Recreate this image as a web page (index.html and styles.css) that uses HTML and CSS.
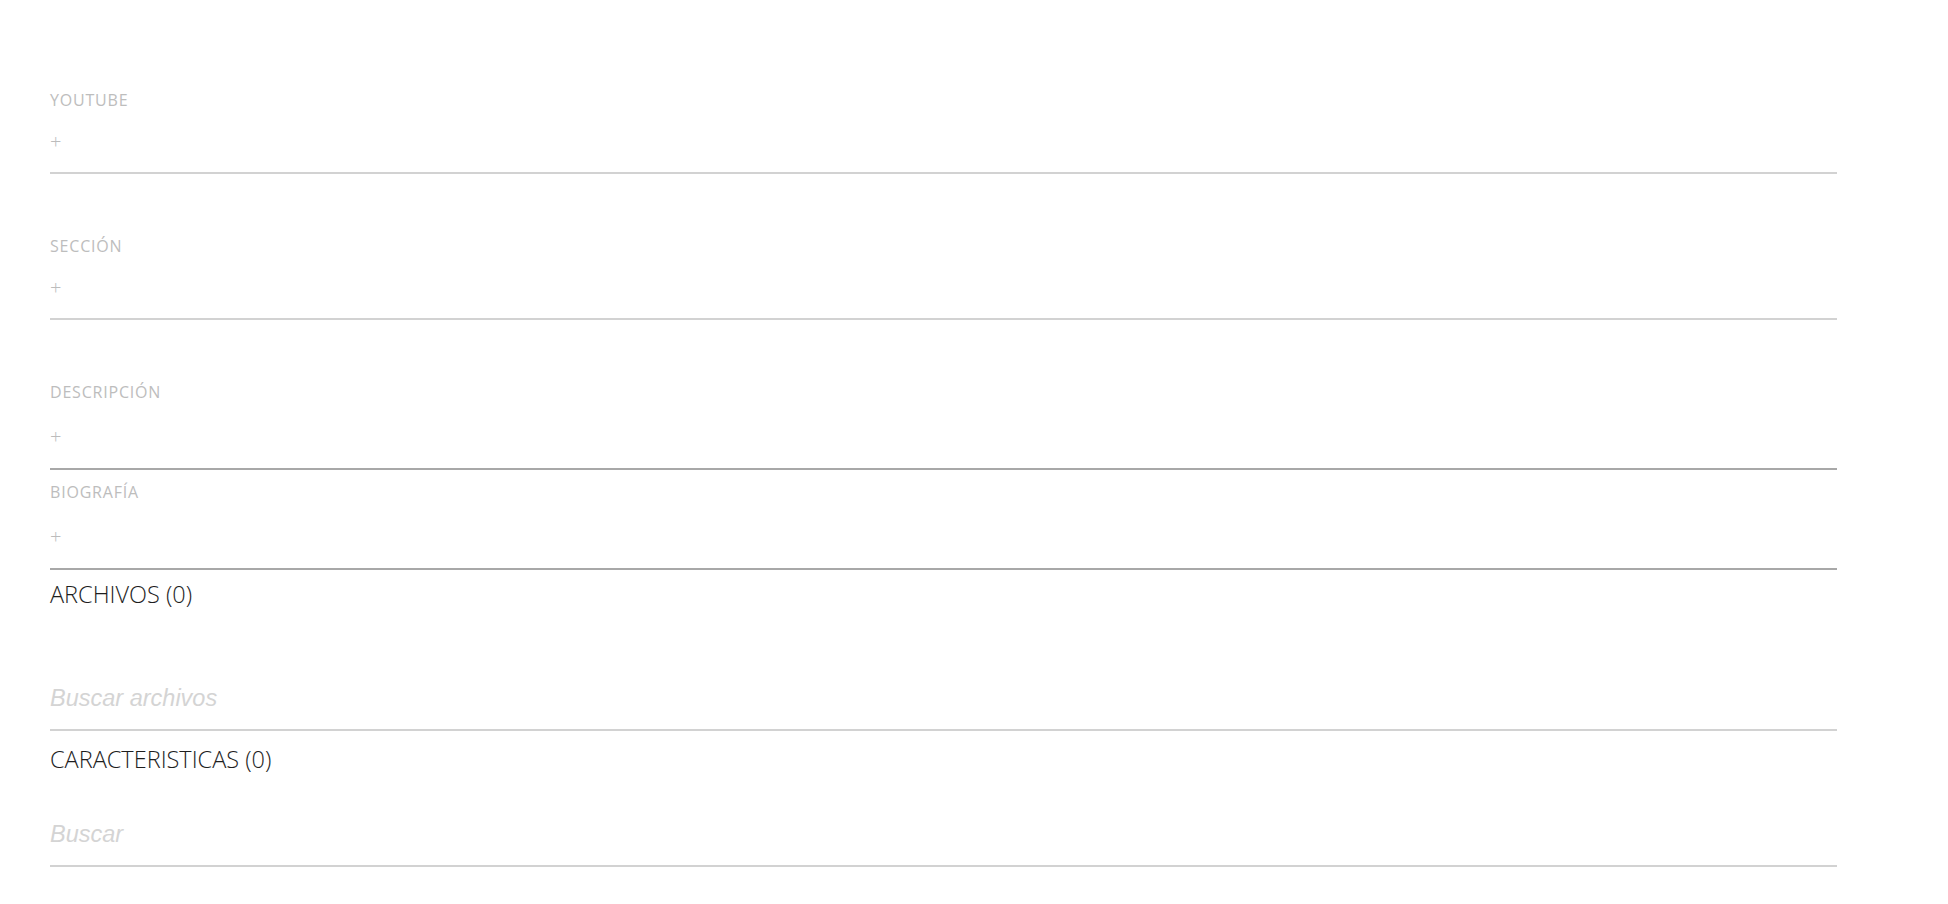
FILE: index.html
```html
<!DOCTYPE html>
<html lang="es">
<head>
    <meta charset="UTF-8">
    <meta name="viewport" content="width=device-width, initial-scale=1.0">
    <title>Editar ficha</title>
    <link rel="stylesheet" href="styles.css">
</head>
<body>
    <main class="editor">
        <div class="field">
            <label class="field-label">YOUTUBE</label>
            <button class="field-add" type="button">+</button>
        </div>

        <div class="field">
            <label class="field-label">SECCIÓN</label>
            <button class="field-add" type="button">+</button>
        </div>

        <div class="field field-text">
            <label class="field-label">DESCRIPCIÓN</label>
            <button class="field-add" type="button">+</button>
        </div>

        <div class="field field-text field-tight">
            <label class="field-label">BIOGRAFÍA</label>
            <button class="field-add" type="button">+</button>
        </div>

        <!-- Relaciones -->
        <section class="related">
            <h2 class="related-title">ARCHIVOS (0)</h2>
            <input class="related-search related-search-far" type="text" placeholder="Buscar archivos">
        </section>

        <section class="related">
            <h2 class="related-title related-title-close">CARACTERISTICAS (0)</h2>
            <input class="related-search" type="text" placeholder="Buscar">
        </section>
    </main>
</body>
</html>
```

FILE: styles.css
```css
body {
    margin: 0;
    background-color: #fff;
    font-family: "Open Sans", sans-serif;
}

.editor {
    width: 1787px;
    padding: 28px 0 0 50px;
}

.field {
    padding: 62px 0 20px;
    border-bottom: 2px solid #d2d2d2;
}

.field-label {
    display: block;
    font-size: 16px;
    line-height: 20px;
    letter-spacing: 0.8px;
    color: #bdbdbd;
}

.field-add {
    display: block;
    margin-top: 22px;
    padding: 0;
    border: none;
    background: none;
    font-family: "Open Sans", sans-serif;
    font-size: 20px;
    font-weight: 300;
    line-height: 20px;
    color: #bcbcbc;
    cursor: pointer;
}

/* campos de texto largo */
.field-text {
    padding-bottom: 21px;
    border-bottom-color: #a8a8a8;
}

.field-text .field-add {
    margin-top: 25px;
}

.field-tight {
    padding-top: 12px;
}

.related-title {
    margin: 9px 0 0;
    font-size: 23.5px;
    font-weight: 300;
    line-height: 30px;
    color: #1e1e1e;
}

.related-title-close {
    margin-top: 13px;
}

.related-search {
    display: block;
    box-sizing: content-box;
    width: 100%;
    height: 30px;
    margin: 45px 0 0;
    padding: 0 0 16px;
    border: none;
    border-bottom: 2px solid #d2d2d2;
    outline: none;
    font-family: "Liberation Sans", Arial, sans-serif;
    font-size: 23.5px;
    font-style: italic;
    color: #333;
}

.related-search-far {
    margin-top: 74px;
}

.related-search::placeholder {
    color: #d4d4d4;
}
```
